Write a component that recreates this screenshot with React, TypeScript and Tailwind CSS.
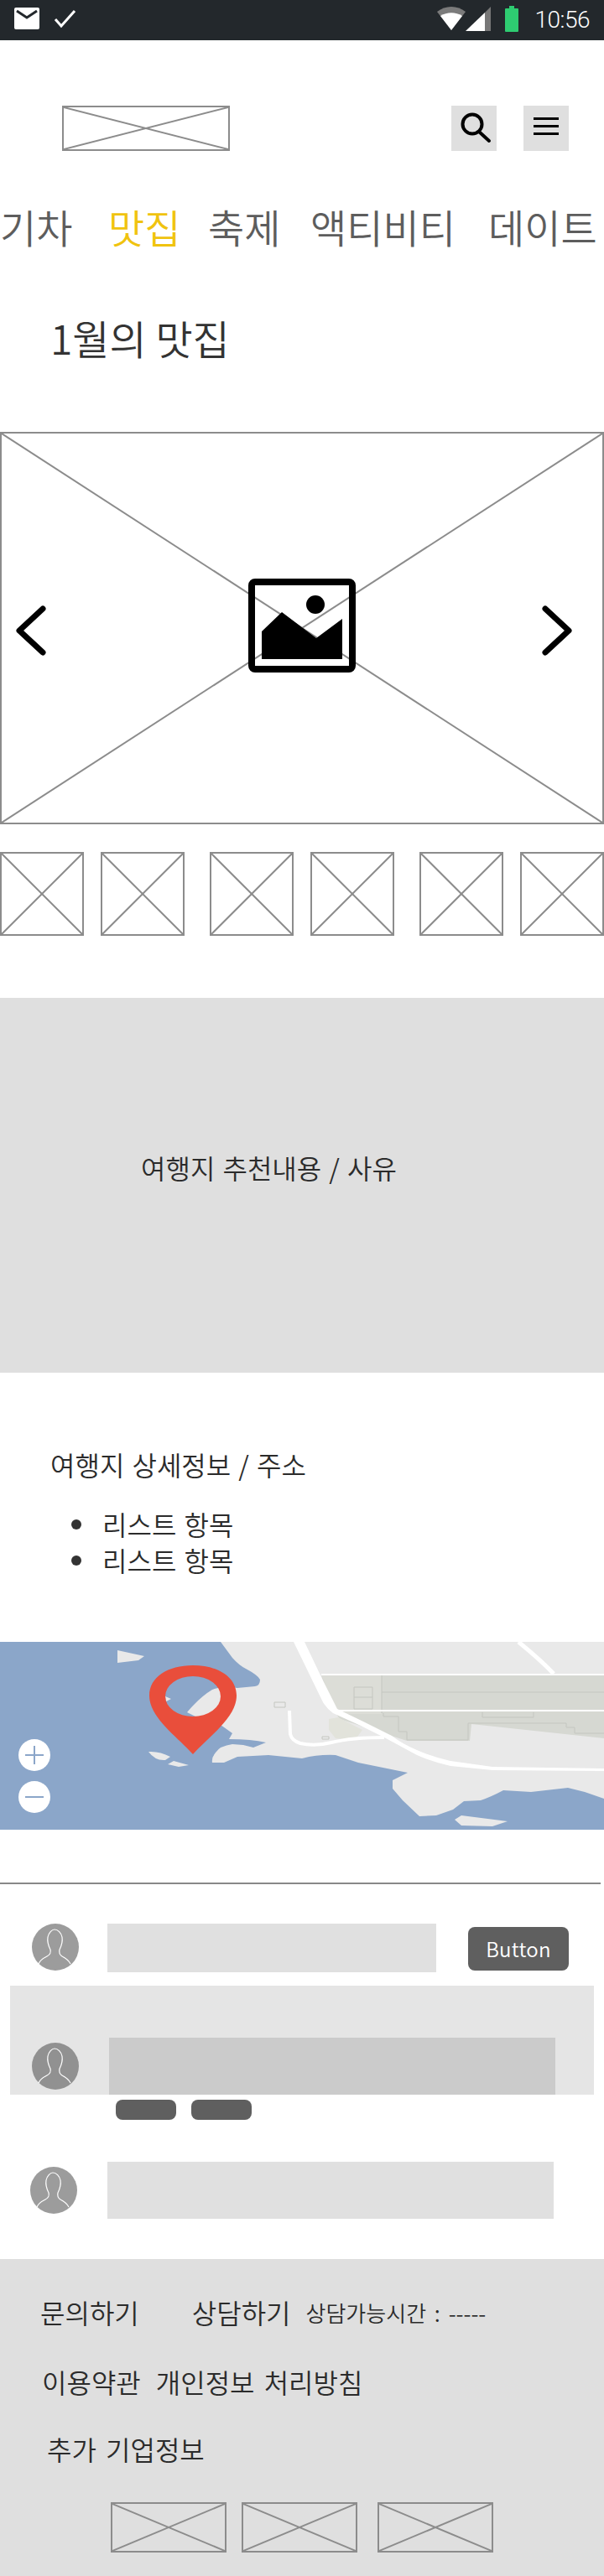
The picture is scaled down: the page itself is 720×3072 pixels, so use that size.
import React from "react";

const FONT = "font-['Noto_Sans_CJK_KR','Noto_Sans',sans-serif]";

const Xbox = ({ className = "" }: { className?: string }) => (
  <div className={"relative border-2 border-[#8c8c8c] " + className}>
    <svg className="absolute inset-0 w-full h-full" preserveAspectRatio="none" viewBox="0 0 100 100">
      <line x1="0" y1="0" x2="100" y2="100" stroke="#8c8c8c" strokeWidth="2" vectorEffect="non-scaling-stroke" />
      <line x1="100" y1="0" x2="0" y2="100" stroke="#8c8c8c" strokeWidth="2" vectorEffect="non-scaling-stroke" />
    </svg>
  </div>
);

const Avatar = ({ className = "", fill = "#9c9c9c" }: { className?: string; fill?: string }) => (
  <svg className={"w-14 h-14 shrink-0 " + className} viewBox="0 0 56 56">
    <circle cx="28" cy="28" r="28" fill={fill} />
    <path
      d="M8 48c2-5 6-7 10-9 4-2 5-4 4-8-2-4-4-9-3-15 1-5 5-9 8-9 4 0 8 4 9 9 1 6-1 11-3 15-1 4 0 6 3 8 4 2 8 5 10 9"
      fill="none"
      stroke="#fff"
      strokeWidth="1.2"
    />
  </svg>
);

const StatusBar = () => (
  <div className="h-12 bg-[#23282c] flex items-center pb-1 pl-[17px] pr-[17px] text-white">
    <svg width="30" height="26" viewBox="0 0 30 26">
      <path d="M2 0h26a2 2 0 0 1 2 2v22a2 2 0 0 1-2 2H2a2 2 0 0 1-2-2V2a2 2 0 0 1 2-2z" fill="#fff" />
      <path d="M3 4l12 8 12-8" fill="none" stroke="#23282c" strokeWidth="3" />
    </svg>
    <svg className="ml-4" width="28" height="24" viewBox="0 0 28 24">
      <path d="M3 13l7 8L26 3" fill="none" stroke="#fff" strokeWidth="3" />
    </svg>
    <svg className="ml-auto" width="34" height="30" viewBox="0 0 34 30">
      <path d="M0 7C10-1 24-1 34 7L17 29z" fill="#7b7b7b" />
      <path d="M4 12c8-5 18-5 26 0L17 29z" fill="#fff" />
    </svg>
    <svg width="30" height="30" viewBox="0 0 30 30">
      <path d="M0 30L23 8v22z" fill="#fff" />
      <path d="M23 8l7-7v29h-7z" fill="#777" />
    </svg>
    <svg className="ml-[17px]" width="16" height="31" viewBox="0 0 16 31">
      <path d="M5 0h6v3h4a1 1 0 0 1 1 1v26a1 1 0 0 1-1 1H1a1 1 0 0 1-1-1V4a1 1 0 0 1 1-1h4z" fill="#2ecc71" />
    </svg>
    <span className="ml-[19px] mt-1 text-[28px] leading-none font-['Roboto'] font-light tracking-[-0.5px]">10:56</span>
  </div>
);

const NAV = [
  { label: "기차", x: "w-[129px]" },
  { label: "맛집", x: "w-[119px]", on: true },
  { label: "축제", x: "w-[122px]" },
  { label: "액티비티", x: "w-[212px]" },
  { label: "데이트", x: "w-[138px]" },
];

const MapView = () => (
  <div className="relative h-[224px] bg-[#8ba6c9] overflow-hidden">
    <svg className="absolute inset-0 w-full h-full" viewBox="0 0 720 224">
      {/* land */}
      <path
        fill="#e9e9e9"
        d="M263 0L277 19Q285 28 293 32Q308 40 310 45Q310 52 304 53L283 55Q265 52 253 57Q238 66 223 84L233 89L263 99L277 109L273 116Q300 116 317 120L302 126L290 123L277 122Q262 124 257 132Q252 138 253 144L267 144L283 137L320 135L360 139Q380 134 400 135L427 144L486 156L468 165L468 175L480 189L500 208L520 207L540 200L553 190L573 189Q585 185 600 177L633 179L677 174L697 179L720 187V0z"
      />
      {/* blocks */}
      <path fill="#d6d8d2" d="M383 39H720V115L562 98L560 118H485L405 92L390 70z" />
      <path fill="#dcddd7" d="M383 39H455V86H402z" />
      <path fill="#e2e3db" d="M392 92L403 90L432 105L423 117L400 115L392 105z" />
      <g fill="none" stroke="#c4c6c0" strokeWidth="1">
        <path d="M455 39V85M422 54H444V80H422zM422 66H444M455 60H720M457 85V89H475V107H485V117H558V97H675V102H685V109H720M575 84V90H636V84" />
        <path d="M327 72H340V78H327z" />
        <path d="M384 113H392V116H384z" />
      </g>
      {/* roads */}
      <path
        fill="#fff"
        d="M363 0L383 42L402 80L433 95L467 112Q480 122 497 129Q515 137 537 142L587 149L720 151V154L587 153L537 148Q515 143 497 135L460 115L430 100L397 85Q390 80 385 72L350 0z"
      />
      <g fill="none" stroke="#fff">
        <path strokeWidth="2" d="M383 39H720M402 82H720" />
        <path strokeWidth="5" d="M618 0Q645 22 660 38" />
        <path strokeWidth="4" d="M345 82L346 110Q348 118 358 121Q375 125 395 120Q420 114 458 114" />
      </g>
      {/* islands */}
      <path
        fill="#e9e9e9"
        d="M140 10L172 17L165 22L140 25L140 18zM197 65L204 68L198 71zM177 131Q190 130 203 137L197 141Q185 142 177 131zM200 146L207 142L225 147L213 149zM542 212L550 207L605 214L587 220L550 219z"
      />
      {/* pin */}
      <path
        fill="#e94e3b"
        fillRule="evenodd"
        d="M230 28C260 28 282 42 282 64C282 90 250 112 230 134C210 112 178 90 178 64C178 42 200 28 230 28zM197 65a33 24 0 1 0 66 0a33 24 0 1 0-66 0z"
      />
    </svg>
    <button className="absolute left-[22px] top-[116px] w-[38px] h-[38px] rounded-full bg-white flex items-center justify-center">
      <svg width="22" height="22" viewBox="0 0 22 22">
        <path d="M11 0v22M0 11h22" stroke="#8ba6c9" strokeWidth="2" />
      </svg>
    </button>
    <button className="absolute left-[22px] top-[166px] w-[38px] h-[38px] rounded-full bg-white flex items-center justify-center">
      <svg width="22" height="22" viewBox="0 0 22 22">
        <path d="M0 11h22" stroke="#8ba6c9" strokeWidth="2" />
      </svg>
    </button>
  </div>
);

export default function App() {
  return (
    <div className={"w-[720px] h-[3072px] bg-white overflow-hidden " + FONT}>
      <StatusBar />

      <header className="flex mt-[78px] pl-[74px]">
        <Xbox className="w-[200px] h-[54px]" />
        <div className="ml-auto mr-[42px] flex gap-8">
          <button className="w-[54px] h-[54px] bg-[#dfdfdf]">
            <svg className="w-full h-full" viewBox="0 0 54 54">
              <circle cx="25" cy="22" r="11.5" fill="none" stroke="#000" strokeWidth="4" />
              <path d="M33 31l12 11" stroke="#000" strokeWidth="4" strokeLinecap="round" />
            </svg>
          </button>
          <button className="w-[54px] h-[54px] bg-[#dfdfdf] flex flex-col gap-[6px] items-center justify-center pb-[5px]">
            <span className="block w-[30px] h-[3px] bg-black" />
            <span className="block w-[30px] h-[3px] bg-black" />
            <span className="block w-[30px] h-[3px] bg-black" />
          </button>
        </div>
      </header>

      <nav className="flex mt-[58px] h-[64px] items-center text-[47px] leading-[64px] text-[#5d5d5d] font-[350] whitespace-nowrap">
        {NAV.map((n) => (
          <a key={n.label} className={n.x + (n.on ? " text-[#f0c30f]" : "")}>
            {n.label}
          </a>
        ))}
      </nav>

      <h1 className="mt-[68px] pl-[60px] text-[48px] leading-[64px] text-[#333] font-[350]">1월의 맛집</h1>

      <div className="relative mt-[81px]">
        <Xbox className="h-[468px]" />
        <svg className="absolute left-[296px] top-[175px]" width="128" height="112" viewBox="0 0 128 112">
          <rect x="4" y="4" width="120" height="104" rx="4" fill="none" stroke="#000" strokeWidth="8" />
          <path d="M16 63L40 40L81 71L112 48V96H16z" fill="#000" />
          <circle cx="80" cy="31" r="11" fill="#000" />
        </svg>
        <svg className="absolute left-[18px] top-[207px]" width="38" height="60" viewBox="0 0 38 60">
          <path d="M33 4L5 30l28 26" fill="none" stroke="#000" strokeWidth="7" strokeLinecap="round" strokeLinejoin="round" />
        </svg>
        <svg className="absolute right-[37px] top-[207px]" width="38" height="60" viewBox="0 0 38 60">
          <path d="M5 4l28 26L5 56" fill="none" stroke="#000" strokeWidth="7" strokeLinecap="round" strokeLinejoin="round" />
        </svg>
      </div>

      <div className="mt-[33px] flex gap-[30px]">
        {[0, 1, 2].map((i) => (
          <div key={i} className="flex gap-5">
            <Xbox className="w-[100px] h-[100px]" />
            <Xbox className="w-[100px] h-[100px]" />
          </div>
        ))}
      </div>

      <section className="mt-[74px] h-[447px] pb-[44px] bg-[#dfdfdf] flex items-center pl-[168px] text-[32px] text-[#2b2b2b] font-[350] [word-spacing:2px]">
        여행지 추천내용 / 사유
      </section>

      <section className="pt-[86px] pl-[60px] text-[32px] text-[#2b2b2b] font-[350] [word-spacing:2px]">
        <p className="leading-[46px]">여행지 상세정보 / 주소</p>
        <ul className="mt-[27px] pl-[25px] leading-[43px]">
          <li className="flex items-center gap-[25px]">
            <span className="block w-3 h-3 rounded-full bg-[#333]" />
            리스트 항목
          </li>
          <li className="flex items-center gap-[25px]">
            <span className="block w-3 h-3 rounded-full bg-[#333]" />
            리스트 항목
          </li>
        </ul>
      </section>

      <div className="mt-[76px]">
        <MapView />
      </div>

      <hr className="mt-[63px] w-[716px] border-t-2 border-[#888]" />

      <div className="mt-[47px] flex pl-[38px] pr-[42px]">
        <Avatar />
        <div className="ml-[34px] w-[392px] h-[58px] bg-[#e0e0e0]" />
        <button className="ml-auto mt-1 w-[120px] h-[52px] rounded-lg bg-[#5f5f5f] text-white text-[24px] font-[350] tracking-[0.3px]">
          Button
        </button>
      </div>

      <div className="mt-4 mx-3 h-[130px] bg-[#e5e5e5] flex items-end">
        <Avatar className="ml-[26px] mb-[6px]" fill="#919191" />
        <div className="ml-9 w-[532px] h-[68px] bg-[#cbcbcb]" />
      </div>
      <div className="mt-[6px] flex gap-[18px] pl-[138px]">
        <span className="block w-[72px] h-6 rounded-lg bg-[#5f5f5f]" />
        <span className="block w-[72px] h-6 rounded-lg bg-[#5f5f5f]" />
      </div>

      <div className="mt-[50px] flex items-center pl-9">
        <Avatar />
        <div className="ml-9 w-[532px] h-[68px] bg-[#e0e0e0]" />
      </div>

      <footer className="mt-[48px] h-[378px] bg-[#dfdfdf] text-[32px] text-[#2b2b2b] font-[350] [word-spacing:4px]">
        <div className="flex items-center pt-[38px] pl-[48px] h-[88px] whitespace-nowrap">
          <span>문의하기</span>
          <span className="ml-[63px]">상담하기</span>
          <span className="ml-[18px] text-[26px]">상담가능시간 : -----</span>
        </div>
        <div className="flex items-center mt-[30px] pl-[50px] h-[56px] whitespace-nowrap">
          <span>이용약관</span>
          <span className="ml-[18px]">개인정보 처리방침</span>
        </div>
        <div className="mt-[24px] pl-[56px] h-[56px] leading-[56px]">추가 기업정보</div>
        <div className="mt-[36px] flex pl-[132px]">
          <Xbox className="w-[138px] h-[60px]" />
          <Xbox className="ml-[18px] w-[138px] h-[60px]" />
          <Xbox className="ml-6 w-[138px] h-[60px]" />
        </div>
      </footer>
    </div>
  );
}
